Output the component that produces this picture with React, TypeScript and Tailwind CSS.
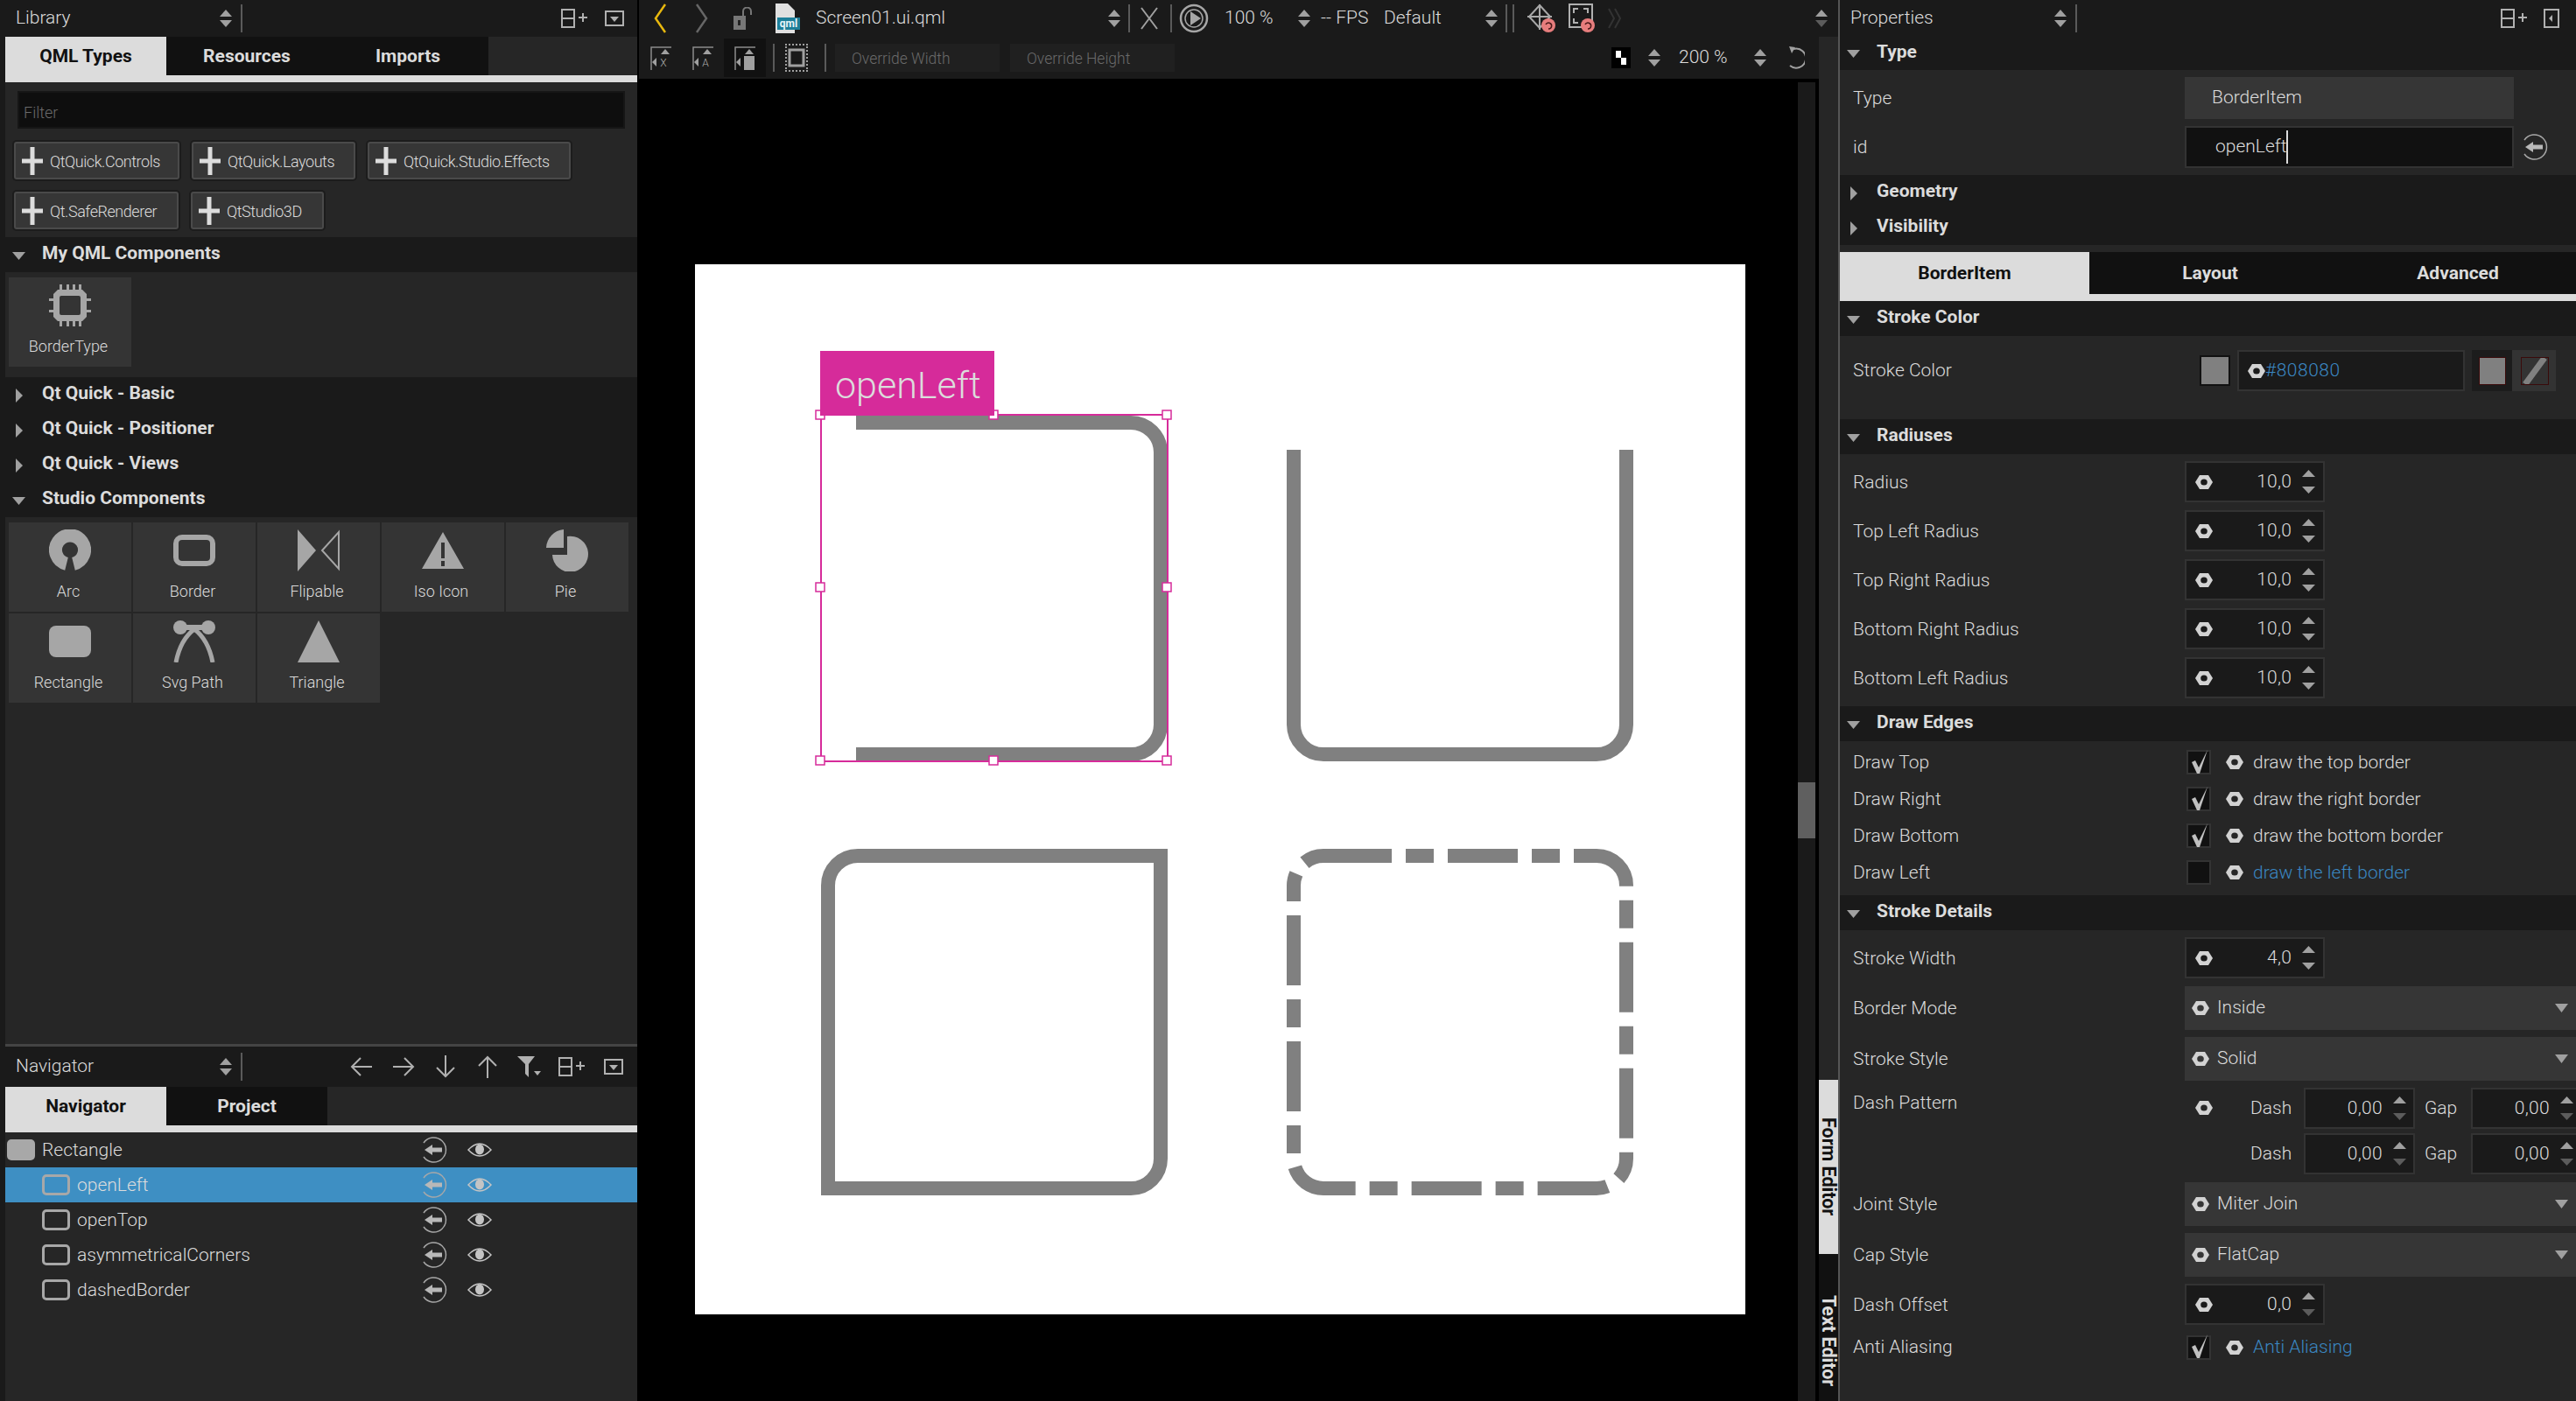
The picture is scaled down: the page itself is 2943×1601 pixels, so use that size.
import React from "react";

const GREY = "#a6a6a6";

const UpDown = ({ dim = false, tall = false }: { dim?: boolean; tall?: boolean }) =>
  tall ? (
    <svg width="15" height="27" viewBox="0 0 15 27" className="shrink-0">
      <path d="M7.5 0 L15 8 H0 Z" fill="#a0a0a0" />
      <path d="M7.5 27 L15 19 H0 Z" fill={dim ? "#5c5c5c" : "#a0a0a0"} />
    </svg>
  ) : (
    <svg width="14" height="20" viewBox="0 0 14 20" className="shrink-0">
      <path d="M7 0 L14 8 H0 Z" fill="#a0a0a0" />
      <path d="M7 20 L14 12 H0 Z" fill={dim ? "#5c5c5c" : "#a0a0a0"} />
    </svg>
  );

const Sep = ({ className = "" }: { className?: string }) => <div className={`h-[32px] w-[2px] shrink-0 bg-[#5a5a5a] ${className}`} />;

const SplitIcon = () => (
  <svg width="30" height="22" viewBox="0 0 30 22" fill="none" stroke="#b0b0b0" strokeWidth="2">
    <rect x="1" y="1" width="14" height="20" />
    <path d="M1 11 H15" />
    <path d="M20 10 H30 M25 5 V15" />
  </svg>
);

const CloseDown = () => (
  <svg width="22" height="18" viewBox="0 0 22 18">
    <rect x="1" y="1" width="20" height="16" fill="none" stroke="#b0b0b0" strokeWidth="2" />
    <path d="M6 7 H16 L11 13 Z" fill="#b0b0b0" />
  </svg>
);

const CloseLeft = () => (
  <svg width="18" height="22" viewBox="0 0 18 22">
    <rect x="1" y="1" width="16" height="20" fill="none" stroke="#b0b0b0" strokeWidth="2" />
    <path d="M6 11 L10 7 V15 Z" fill="#b0b0b0" />
  </svg>
);

const Nut = () => (
  <svg width="20" height="16" viewBox="0 0 20 16" className="shrink-0">
    <path
      fillRule="evenodd"
      d="M0 8 L5 0 H15 L20 8 L15 16 H5 Z M10 4.5 A3.8 3.5 0 1 0 10 11.5 A3.8 3.5 0 1 0 10 4.5 Z"
      fill="#d2d2d2"
    />
  </svg>
);

const BackArrow = () => (
  <svg width="30" height="30" viewBox="0 0 30 30" fill="none" className="shrink-0">
    <path d="M3 7 A14 14 0 1 1 3 23" stroke="#a8a8a8" strokeWidth="1.5" />
    <path d="M4 15 L13 9 V12.5 H24 V17.5 H13 V21 Z" fill="#b8b8b8" />
  </svg>
);

const Eye = () => (
  <svg width="28" height="20" viewBox="0 0 28 20" className="shrink-0">
    <path d="M1 10 Q14 -4 27 10 Q14 24 1 10 Z" fill="none" stroke="#c4c4c4" strokeWidth="1.5" />
    <ellipse cx="14" cy="9.5" rx="5" ry="6" fill="#c4c4c4" />
  </svg>
);

const Check = ({ on }: { on: boolean }) => (
  <div className="flex h-[28px] w-[28px] shrink-0 items-center justify-center border-2 border-[#333333] bg-[#111111]">
    {on && (
      <svg width="24" height="28" viewBox="0 0 22 28" className="-mt-[3px] ml-[2px]">
        <path d="M2 15 L6 13 L10 21 L20 1 L11 28 H8 Z" fill="#c0c0c0" />
      </svg>
    )}
  </div>
);

const Section = ({ title, open = true }: { title: string; open?: boolean }) => (
  <div className="flex h-[40px] shrink-0 items-center bg-[#1a1a1a] pl-[8px]">
    <div className="flex w-[34px] justify-start">
      {open ? (
        <svg width="15" height="9" viewBox="0 0 15 9" className="mt-[2px]">
          <path d="M0 0 H15 L7.5 9 Z" fill="#a0a0a0" />
        </svg>
      ) : (
        <svg width="8" height="16" viewBox="0 0 8 16" className="ml-[4px] mt-[2px]">
          <path d="M0 0 L8 8 L0 16 Z" fill="#a0a0a0" />
        </svg>
      )}
    </div>
    <span className="pb-[3px] text-[21px] font-bold text-[#dcdcdc]">{title}</span>
  </div>
);

const TabBar = ({ tabs }: { tabs: string[] }) => (
  <div className="shrink-0 border-b-[8px] border-[#dcdcdc] bg-[#262626]">
    <div className="flex h-[44px]">
      {tabs.map((t, i) => (
        <div
          key={t}
          className={`flex h-full w-[184px] items-center justify-center pt-[1px] text-[21px] font-bold ${
            i === 0 ? "bg-[#dcdcdc] text-[#111111]" : "bg-[#111111] text-[#dcdcdc]"
          }`}
        >
          {t}
        </div>
      ))}
    </div>
  </div>
);

const ImportButton = ({ label, width }: { label: string; width: string }) => (
  <div className={`flex h-[43px] items-center rounded-[3px] border-2 border-[#4a4a4a] bg-[#363636] pl-[7px] shadow-[0_0_0_2px_#1c1c1c] ${width}`}>
    <svg width="24" height="32" viewBox="0 0 24 32" className="shrink-0">
      <path d="M9.5 0 H14.5 V13.5 H24 V18.5 H14.5 V32 H9.5 V18.5 H0 V13.5 H9.5 Z" fill="#dcdcdc" />
    </svg>
    <span className="ml-[8px] pt-[1px] text-[18px] font-light tracking-[-0.45px] text-[#dcdcdc]">{label}</span>
  </div>
);

const Tile = ({ label, children }: { label: string; children: React.ReactNode }) => (
  <div className="flex h-[102px] w-[140px] flex-col items-center bg-[#343434] pt-[8px]">
    <svg width="48" height="48" viewBox="0 0 48 48" className="shrink-0">
      {children}
    </svg>
    <span className="mt-[11px] -ml-[4px] text-[18px] leading-[24px] font-light text-[#dcdcdc]">{label}</span>
  </div>
);

const NavRow = ({ label, solid = false, selected = false }: { label: string; solid?: boolean; selected?: boolean }) => (
  <div className={`flex h-[40px] items-center ${selected ? "bg-[#3e8fc3]" : ""} ${solid ? "pl-[2px]" : "pl-[42px]"}`}>
    <div
      className={`h-[24px] w-[32px] shrink-0 rounded-[5px] ${solid ? "bg-[#a8a8a8]" : "border-[3px] border-[#a8a8a8]"}`}
    />
    <span className="ml-[8px] w-[406px] shrink-0 pt-[2px] text-[21px] font-light text-[#dcdcdc]">{label}</span>
    <div className={`${solid ? "ml-[27px]" : "-ml-[13px]"} flex items-center gap-[23px]`}>
      <BackArrow />
      <Eye />
    </div>
  </div>
);

const Label = ({ children }: { children: React.ReactNode }) => (
  <span className="w-[379px] shrink-0 pt-[2px] text-[21px] font-light text-[#dcdcdc]">{children}</span>
);

const SpinBox = ({ value }: { value: string }) => (
  <div className="flex h-[47px] w-[160px] shrink-0 items-center border-2 border-[#333333] bg-[#1a1a1a] pl-[10px]">
    <Nut />
    <span className="mr-[12px] flex-1 text-right text-[21px] font-light tracking-[0.2px] text-[#dcdcdc]">{value}</span>
    <div className="mr-[9px]">
      <UpDown tall dim={value === "0,0"} />
    </div>
  </div>
);

const SpinRow = ({ label, value, className = "" }: { label: string; value: string; className?: string }) => (
  <div className={`flex items-center pl-[15px] ${className}`}>
    <Label>{label}</Label>
    <SpinBox value={value} />
  </div>
);

const Combo = ({ label, value, className = "" }: { label: string; value: string; className?: string }) => (
  <div className={`flex items-center pl-[15px] ${className}`}>
    <Label>{label}</Label>
    <div className="flex h-[50px] flex-1 items-center bg-[#363636] pl-[8px]">
      <Nut />
      <span className="ml-[9px] flex-1 text-[21px] font-light text-[#dcdcdc]">{value}</span>
      <svg width="15" height="10" viewBox="0 0 15 10" className="mr-[9px]">
        <path d="M0 0 H15 L7.5 10 Z" fill="#a0a0a0" />
      </svg>
    </div>
  </div>
);

const CheckRow = ({ label, text, on, blue = false }: { label: string; text: string; on: boolean; blue?: boolean }) => (
  <div className="flex h-[42px] items-center pl-[15px]">
    <Label>{label}</Label>
    <div className="ml-[2px]">
      <Check on={on} />
    </div>
    <div className="ml-[17px]">
      <Nut />
    </div>
    <span className={`ml-[11px] pt-[2px] text-[21px] font-light ${blue ? "text-[#3a87c2]" : "text-[#dcdcdc]"}`}>{text}</span>
  </div>
);

const DashSpin = ({ value }: { value: string }) => (
  <div className="flex h-[47px] w-[127px] shrink-0 items-center border-2 border-[#333333] bg-[#1a1a1a]">
    <span className="mr-[12px] flex-1 text-right text-[21px] font-light tracking-[0.3px] text-[#dcdcdc]">{value}</span>
    <div className="mr-[8px]">
      <UpDown tall dim />
    </div>
  </div>
);

const DashLine = () => (
  <div className="flex items-center">
    <span className="w-[61px] text-[21px] font-light text-[#dcdcdc]">Dash</span>
    <DashSpin value="0,00" />
    <span className="ml-[11px] w-[53px] text-[21px] font-light text-[#dcdcdc]">Gap</span>
    <DashSpin value="0,00" />
  </div>
);

const Handle = ({ x, y }: { x: number; y: number }) => (
  <rect x={x - 5} y={y - 5} width="10" height="10" fill="#ffffff" stroke="#d62b9a" strokeWidth="1.5" />
);

const LibraryPanel = () => (
  <div className="flex h-[1193px] flex-col overflow-hidden">
    <div className="flex h-[42px] shrink-0 items-center bg-[#1a1a1a] pl-[12px]">
      <span className="w-[233px] text-[21px] font-light text-[#dcdcdc]">Library</span>
      <UpDown />
      <Sep className="ml-[10px]" />
      <div className="ml-auto flex items-center gap-[20px] pr-[15px]">
        <SplitIcon />
        <CloseDown />
      </div>
    </div>
    <TabBar tabs={["QML Types", "Resources", "Imports"]} />
    <div className="flex-1 bg-[#262626]">
      <div className="mx-[14px] mt-[10px] flex h-[43px] items-center border-2 border-[#161616] bg-[#0e0e0e] pl-[5px] pt-[5px] text-[18px] font-light text-[#6a6a6a]">
        Filter
      </div>
      <div className="mt-[15px] flex gap-[14px] pl-[10px]">
        <ImportButton label="QtQuick.Controls" width="w-[189px]" />
        <ImportButton label="QtQuick.Layouts" width="w-[187px]" />
        <ImportButton label="QtQuick.Studio.Effects" width="w-[232px]" />
      </div>
      <div className="mt-[14px] flex gap-[14px] pl-[10px]">
        <ImportButton label="Qt.SafeRenderer" width="w-[188px]" />
        <ImportButton label="QtStudio3D" width="w-[152px]" />
      </div>
      <div className="mt-[9px]">
        <Section title="My QML Components" />
      </div>
      <div className="py-[6px] pb-[12px] pl-[4px]">
        <Tile label="BorderType">
          <g fill="#a6a6a6">
            <path
              fillRule="evenodd"
              d="M10 6 H38 L43 11 V37 L38 42 H10 L5 37 V11 Z M14 13 A2 2 0 0 0 12 15 V33 A2 2 0 0 0 14 35 H34 A2 2 0 0 0 36 33 V15 A2 2 0 0 0 34 13 Z"
            />
            <path d="M12 0 H15 V6 H12 Z M20 0 H23 V6 H20 Z M27 0 H30 V6 H27 Z M34 0 H37 V6 H34 Z" />
            <path d="M12 42 H15 V48 H12 Z M20 42 H23 V48 H20 Z M27 42 H30 V48 H27 Z M34 42 H37 V48 H34 Z" />
            <path d="M0 16 H5 V19 H0 Z M0 29 H5 V32 H0 Z M43 16 H48 V19 H43 Z M43 29 H48 V32 H43 Z" />
          </g>
        </Tile>
      </div>
      <Section title="Qt Quick - Basic" open={false} />
      <Section title="Qt Quick - Positioner" open={false} />
      <Section title="Qt Quick - Views" open={false} />
      <Section title="Studio Components" />
      <div className="grid grid-cols-[repeat(5,140px)] gap-[2px] pl-[4px] pt-[6px]">
        <Tile label="Arc">
          <path d="M28 39.4 A16.5 16.5 0 1 0 20 39.4" fill="none" stroke={GREY} strokeWidth="15" />
        </Tile>
        <Tile label="Border">
          <rect x="3" y="9" width="42" height="30" rx="7" fill="none" stroke={GREY} strokeWidth="6" />
        </Tile>
        <Tile label="Flipable">
          <path d="M0 0 L21 24 L0 48 Z" fill={GREY} />
          <path d="M47 3 V45 L28 24 Z" fill="none" stroke={GREY} strokeWidth="2" />
        </Tile>
        <Tile label="Iso Icon">
          <path
            fillRule="evenodd"
            d="M24 3 L48 45 H0 Z M22 15 V33 H26 V15 Z M22 36 V42 H26 V36 Z"
            fill={GREY}
          />
        </Tile>
        <Tile label="Pie">
          <path d="M20 0 V21 H0 A22 22 0 0 1 20 0 Z" fill={GREY} />
          <path d="M24 8 A20.5 20.5 0 1 1 7 29 H24 Z" fill={GREY} />
        </Tile>
        <Tile label="Rectangle">
          <rect x="0" y="6" width="48" height="36" rx="8" fill={GREY} />
        </Tile>
        <Tile label="Svg Path">
          <ellipse cx="8" cy="8" rx="8" ry="8" fill={GREY} />
          <ellipse cx="40" cy="8" rx="8" ry="8" fill={GREY} />
          <path d="M8 8 H40" stroke={GREY} strokeWidth="6" />
          <path d="M3 48 Q8 22 24 10 Q40 22 45 48" fill="none" stroke={GREY} strokeWidth="5" />
        </Tile>
        <Tile label="Triangle">
          <path d="M24 0 L48 48 H0 Z" fill={GREY} />
        </Tile>
      </div>
    </div>
  </div>
);

const NavSlot = ({ children }: { children: React.ReactNode }) => (
  <div className="flex w-[48px] justify-center">{children}</div>
);

const NavigatorPanel = () => (
  <div className="flex flex-1 flex-col overflow-hidden border-t-[3px] border-[#444444]">
    <div className="flex h-[46px] shrink-0 items-center bg-[#1a1a1a] pl-[12px]">
      <span className="w-[233px] text-[21px] font-light text-[#dcdcdc]">Navigator</span>
      <UpDown />
      <Sep className="ml-[10px]" />
      <div className="ml-auto flex items-center pr-[3px]">
        <NavSlot>
          <svg width="26" height="22" viewBox="0 0 26 22" fill="none" stroke="#b0b0b0" strokeWidth="2">
            <path d="M25 11 H2 M12 1 L2 11 L12 21" />
          </svg>
        </NavSlot>
        <NavSlot>
          <svg width="26" height="22" viewBox="0 0 26 22" fill="none" stroke="#b0b0b0" strokeWidth="2">
            <path d="M1 11 H24 M14 1 L24 11 L14 21" />
          </svg>
        </NavSlot>
        <NavSlot>
          <svg width="22" height="26" viewBox="0 0 22 26" fill="none" stroke="#b0b0b0" strokeWidth="2">
            <path d="M11 0 V24 M1 14 L11 24 L21 14" />
          </svg>
        </NavSlot>
        <NavSlot>
          <svg width="22" height="26" viewBox="0 0 22 26" fill="none" stroke="#b0b0b0" strokeWidth="2">
            <path d="M11 26 V2 M1 12 L11 2 L21 12" />
          </svg>
        </NavSlot>
        <NavSlot>
          <svg width="28" height="24" viewBox="0 0 28 24">
            <path d="M0 0 H20 L13 9 V24 L9 20 V9 Z" fill="#b0b0b0" />
            <path d="M19 17 H27 L23 22 Z" fill="#b0b0b0" />
          </svg>
        </NavSlot>
        <NavSlot>
          <SplitIcon />
        </NavSlot>
        <NavSlot>
          <CloseDown />
        </NavSlot>
      </div>
    </div>
    <TabBar tabs={["Navigator", "Project"]} />
    <div className="flex-1 bg-[#262626]">
      <NavRow label="Rectangle" solid />
      <NavRow label="openLeft" selected />
      <NavRow label="openTop" />
      <NavRow label="asymmetricalCorners" />
      <NavRow label="dashedBorder" />
    </div>
  </div>
);

const TopBar = () => (
  <div className="flex h-[42px] shrink-0 items-center bg-[#1a1a1a]">
    <svg width="14" height="34" viewBox="0 0 14 34" fill="none" stroke="#e8b80e" strokeWidth="2.5" className="ml-[17px] shrink-0">
      <path d="M13 1 L2 17 L13 33" />
    </svg>
    <svg width="14" height="34" viewBox="0 0 14 34" fill="none" stroke="#666666" strokeWidth="2.5" className="ml-[34px] shrink-0">
      <path d="M1 1 L12 17 L1 33" />
    </svg>
    <svg width="22" height="26" viewBox="0 0 22 26" className="ml-[29px] shrink-0">
      <rect x="0" y="10" width="14" height="16" fill="#777777" />
      <rect x="5" y="15" width="3" height="6" fill="#222222" />
      <path d="M11 10 V5 A4.5 4.5 0 0 1 20 5 V9" fill="none" stroke="#777777" strokeWidth="2" />
    </svg>
    <svg width="28" height="34" viewBox="0 0 28 34" className="ml-[26px] shrink-0">
      <path d="M0 0 H14 L22 8 V34 H0 Z" fill="#e0e0e0" />
      <rect x="2" y="16" width="26" height="14" fill="#1d7f99" />
      <text x="15" y="27" textAnchor="middle" fontSize="12" fontWeight="bold" fill="#e8f4f8">qml</text>
    </svg>
    <span className="ml-[18px] w-[334px] shrink-0 text-[21px] font-light text-[#dcdcdc]">Screen01.ui.qml</span>
    <UpDown />
    <Sep className="ml-[9px]" />
    <svg width="22" height="32" viewBox="0 0 22 32" fill="none" stroke="#a0a0a0" strokeWidth="2" className="ml-[11px] shrink-0">
      <path d="M2 4 L20 28 M20 4 L2 28" />
    </svg>
    <Sep className="ml-[13px]" />
    <svg width="34" height="34" viewBox="0 0 34 34" className="ml-[8px] shrink-0">
      <circle cx="17" cy="17" r="15" fill="none" stroke="#a6a6a6" strokeWidth="2.5" />
      <circle cx="17" cy="17" r="10" fill="none" stroke="#a6a6a6" strokeWidth="1.5" />
      <path d="M13 9 L25 17 L13 25 Z" fill="#a6a6a6" />
    </svg>
    <span className="ml-[18px] w-[84px] shrink-0 text-[21px] font-light text-[#dcdcdc]">100 %</span>
    <UpDown />
    <span className="ml-[12px] w-[72px] shrink-0 text-[21px] font-light text-[#dcdcdc]">-- FPS</span>
    <span className="w-[116px] shrink-0 text-[21px] font-light text-[#dcdcdc]">Default</span>
    <UpDown />
    <Sep className="ml-[9px]" />
    <Sep className="ml-[6px]" />
    <svg width="33" height="34" viewBox="0 0 33 34" className="ml-[15px] shrink-0">
      <path d="M14 2 L26 15 L14 28 L2 15 Z" fill="none" stroke="#a8a8a8" strokeWidth="2" />
      <path d="M0 15 H28 M14 1 V30" stroke="#a8a8a8" strokeWidth="2" />
      <circle cx="24" cy="25" r="8" fill="#e77d7d" />
      <path d="M21 24 A3.5 3.5 0 1 1 24 29" fill="none" stroke="#4a1a1a" strokeWidth="1.5" />
    </svg>
    <svg width="30" height="34" viewBox="0 0 30 34" className="ml-[14px] shrink-0">
      <rect x="1" y="1" width="26" height="26" fill="none" stroke="#b0b0b0" strokeWidth="2" />
      <path d="M6 11 V6 H11 M17 6 H22 V11 M6 17 V22 H11" fill="none" stroke="#b0b0b0" strokeWidth="2" />
      <circle cx="22" cy="25" r="8" fill="#e77d7d" />
      <path d="M19 24 A3.5 3.5 0 1 1 22 29" fill="none" stroke="#4a1a1a" strokeWidth="1.5" />
    </svg>
    <svg width="16" height="26" viewBox="0 0 16 26" fill="none" stroke="#333333" strokeWidth="2" className="ml-[14px] shrink-0">
      <path d="M2 2 L8 13 L2 24 M9 2 L15 13 L9 24" />
    </svg>
    <div className="ml-auto pr-[12px]">
      <UpDown dim />
    </div>
  </div>
);

const ModeIcon = ({ label, solid = false }: { label?: string; solid?: boolean }) => (
  <svg width="24" height="27" viewBox="0 0 24 27" className="shrink-0">
    <path d="M1 27 V1 H24" fill="none" stroke="#8c8c8c" strokeWidth="1.5" />
    <path d="M17 3 L22 9 H12 Z" fill="#a0a0a0" />
    <path d="M2 18 L7 13 V23 Z" fill="#a0a0a0" />
    {label && (
      <text x="15" y="23" textAnchor="middle" fontSize="12" fontWeight="300" fill="#b0b0b0">
        {label}
      </text>
    )}
    {solid && <rect x="11" y="11" width="12" height="16" fill="#a0a0a0" />}
  </svg>
);

const SecondBar = () => (
  <div className="flex h-[48px] shrink-0 items-center bg-[#1a1a1a]">
    <div className="ml-[13px]">
      <ModeIcon label="X" />
    </div>
    <div className="ml-[24px]">
      <ModeIcon label="A" />
    </div>
    <div className="ml-[12px] flex h-[44px] w-[48px] items-center justify-center bg-[#111111]">
      <ModeIcon solid />
    </div>
    <Sep className="ml-[8px]" />
    <svg width="26" height="32" viewBox="0 0 26 32" className="ml-[12px] shrink-0">
      <path d="M0 1 H26 M0 31 H26" stroke="#a0a0a0" strokeWidth="2" strokeDasharray="2 2" />
      <rect x="5" y="7" width="16" height="18" fill="none" stroke="#a0a0a0" strokeWidth="3" />
      <path d="M1 3 V29 M25 3 V29" stroke="#a0a0a0" strokeWidth="2" strokeDasharray="2 2" />
    </svg>
    <Sep className="ml-[19px]" />
    <div className="ml-[10px] flex h-[32px] w-[188px] items-center bg-[#202020] pl-[19px] pt-[2px] text-[17.5px] font-light text-[#6a6a6a]">Override Width</div>
    <div className="ml-[12px] flex h-[32px] w-[188px] items-center bg-[#202020] pl-[19px] pt-[2px] text-[17.5px] font-light text-[#6a6a6a]">Override Height</div>
    <svg width="22" height="24" viewBox="0 0 22 24" className="ml-[499px] shrink-0">
      <rect width="22" height="24" fill="#000000" />
      <rect x="5" y="4" width="6" height="8" fill="#ffffff" />
      <rect x="11" y="12" width="6" height="8" fill="#ffffff" />
    </svg>
    <div className="ml-[20px]">
      <UpDown />
    </div>
    <span className="ml-[21px] w-[86px] shrink-0 text-[21px] font-light text-[#dcdcdc]">200 %</span>
    <UpDown />
    <svg width="20" height="30" viewBox="0 0 20 30" fill="none" stroke="#a0a0a0" strokeWidth="2" className="ml-[24px] shrink-0">
      <path d="M7 5 A11 11 0 1 1 3 24" />
      <path d="M2 2 L9 3 L5 10 Z" fill="#a0a0a0" stroke="none" />
    </svg>
  </div>
);

const Canvas = () => (
  <div className="relative h-[1200px] w-[1200px] shrink-0 bg-white">
    <svg width="1200" height="1200" viewBox="0 0 1200 1200" fill="none" stroke="#808080" strokeWidth="16" className="block">
      <path d="M184 181 H498 A34 34 0 0 1 532 215 V526 A34 34 0 0 1 498 560 H184" />
      <path d="M684 212 V526 A34 34 0 0 0 718 560 H1030 A34 34 0 0 0 1064 526 V212" />
      <path d="M186 676 H532 V1022 A34 34 0 0 1 498 1056 H152 V710 A34 34 0 0 1 186 676 Z" />
      <path
        d="M718 676 H1030 A34 34 0 0 1 1064 710 V1022 A34 34 0 0 1 1030 1056 H718 A34 34 0 0 1 684 1022 V710 A34 34 0 0 1 718 676 Z"
        strokeDasharray="80 16 32 16"
        strokeDashoffset="2"
      />
      <g stroke="#d62b9a" strokeWidth="2">
        <rect x="144" y="172" width="396" height="396" />
      </g>
      <g stroke="none">
        <Handle x={143} y={172} />
        <Handle x={341} y={172} />
        <Handle x={539} y={172} />
        <Handle x={143} y={369} />
        <Handle x={539} y={369} />
        <Handle x={143} y={567} />
        <Handle x={341} y={567} />
        <Handle x={539} y={567} />
      </g>
    </svg>
    <div className="absolute left-[143px] top-[99px] flex h-[74px] w-[199px] items-center bg-[#d62b9a] pl-[17px] pt-[4px] text-[43px] font-light text-[#dcdcdc]">
      openLeft
    </div>
  </div>
);

const PropertiesPanel = () => (
  <div className="flex h-full w-[841px] shrink-0 flex-col overflow-hidden bg-[#262626]">
    <div className="flex h-[42px] shrink-0 items-center bg-[#1a1a1a] pl-[12px]">
      <span className="w-[233px] text-[21px] font-light text-[#dcdcdc]">Properties</span>
      <UpDown />
      <Sep className="ml-[10px]" />
      <div className="ml-auto flex items-center gap-[19px] pr-[19px]">
        <SplitIcon />
        <CloseLeft />
      </div>
    </div>
    <div className="flex h-[38px] shrink-0 items-center bg-[#1a1a1a] pl-[8px]">
      <svg width="15" height="9" viewBox="0 0 15 9">
        <path d="M0 0 H15 L7.5 9 Z" fill="#a0a0a0" />
      </svg>
      <span className="ml-[19px] pb-[3px] text-[21px] font-bold text-[#dcdcdc]">Type</span>
    </div>
    <div className="flex flex-col gap-[8px] py-[8px]">
      <div className="flex items-center pl-[15px]">
        <Label>Type</Label>
        <div className="flex h-[48px] w-[376px] items-center bg-[#363636] pl-[31px] text-[21px] font-light text-[#dcdcdc]">BorderItem</div>
      </div>
      <div className="flex items-center pl-[15px]">
        <Label>id</Label>
        <div className="flex h-[48px] w-[376px] items-center border-2 border-[#333333] bg-[#111111] pl-[33px] text-[21px] font-light text-[#dcdcdc]">
          openLeft
          <div className="h-[38px] w-[2px] bg-[#dcdcdc]" />
        </div>
        <div className="ml-[9px]">
          <BackArrow />
        </div>
      </div>
    </div>
    <Section title="Geometry" open={false} />
    <Section title="Visibility" open={false} />
    <div className="h-[8px] shrink-0" />
    <div className="flex h-[48px] shrink-0 bg-[#111111]">
      <div className="flex w-[285px] shrink-0 items-center justify-center bg-[#dcdcdc] pt-[1px] text-[21px] font-bold text-[#111111]">BorderItem</div>
      <div className="flex w-[276px] shrink-0 items-center justify-center pt-[1px] text-[21px] font-bold text-[#dcdcdc]">Layout</div>
      <div className="flex w-[290px] shrink-0 items-center justify-center pt-[1px] text-[21px] font-bold text-[#dcdcdc]">Advanced</div>
    </div>
    <div className="h-[8px] shrink-0 bg-[#dcdcdc]" />
    <Section title="Stroke Color" />
    <div className="flex h-[95px] shrink-0 items-start pl-[15px] pt-[16px]">
      <span className="mt-[8px] w-[379px] shrink-0 text-[21px] font-light text-[#dcdcdc]">Stroke Color</span>
      <div className="ml-[17px] mt-[6px] h-[35px] w-[35px] border-2 border-[#111111] bg-[#808080]" />
      <div className="ml-[8px] flex h-[47px] w-[260px] items-center border-2 border-[#333333] bg-[#1a1a1a] pl-[10px] text-[21px] font-light tracking-[0.5px] text-[#3a87c2]">
        <Nut />
        <span>#808080</span>
      </div>
      <div className="ml-[8px] flex h-[47px] w-[96px] bg-[#333333]">
        <div className="flex w-[46px] items-center justify-center bg-[#1c1c1c]">
          <div className="h-[32px] w-[31px] border border-[#3a0a0a] bg-[#808080]" />
        </div>
        <div className="ml-[10px] mt-[8px] h-[32px] w-[32px] border border-[#3a0a0a] bg-[#333333]">
          <svg width="30" height="30" viewBox="0 0 30 30">
            <path d="M4 30 L26 0" stroke="#808080" strokeWidth="7" />
          </svg>
        </div>
      </div>
    </div>
    <Section title="Radiuses" />
    <div className="flex h-[288px] shrink-0 flex-col gap-[9px] pt-[8px]">
      <SpinRow label="Radius" value="10,0" />
      <SpinRow label="Top Left Radius" value="10,0" />
      <SpinRow label="Top Right Radius" value="10,0" />
      <SpinRow label="Bottom Right Radius" value="10,0" />
      <SpinRow label="Bottom Left Radius" value="10,0" />
    </div>
    <Section title="Draw Edges" />
    <div className="flex h-[176px] shrink-0 flex-col pt-[3px]">
      <CheckRow label="Draw Top" text="draw the top border" on />
      <CheckRow label="Draw Right" text="draw the right border" on />
      <CheckRow label="Draw Bottom" text="draw the bottom border" on />
      <CheckRow label="Draw Left" text="draw the left border" on={false} blue />
    </div>
    <Section title="Stroke Details" />
    <div className="flex flex-col pt-[8px]">
      <SpinRow label="Stroke Width" value="4,0" />
      <Combo label="Border Mode" value="Inside" className="mt-[9px]" />
      <Combo label="Stroke Style" value="Solid" className="mt-[8px]" />
      <div className="mt-[8px] flex h-[99px] pl-[15px]">
        <span className="w-[379px] shrink-0 pt-[2px] text-[21px] font-light text-[#dcdcdc]">Dash Pattern</span>
        <div className="ml-[12px] mt-[15px]">
          <Nut />
        </div>
        <div className="ml-[43px] flex flex-col gap-[5px]">
          <DashLine />
          <DashLine />
        </div>
      </div>
      <Combo label="Joint Style" value="Miter Join" className="mt-[9px]" />
      <Combo label="Cap Style" value="FlatCap" className="mt-[8px]" />
      <SpinRow label="Dash Offset" value="0,0" className="mt-[8px]" />
      <div className="mt-[10px] flex items-center pl-[15px]">
        <span className="w-[379px] shrink-0 text-[21px] font-light text-[#dcdcdc]">Anti Aliasing</span>
        <div className="ml-[2px]">
          <Check on />
        </div>
        <div className="ml-[17px]">
          <Nut />
        </div>
        <span className="ml-[11px] text-[21px] font-light text-[#3a87c2]">Anti Aliasing</span>
      </div>
    </div>
  </div>
);

export default function App() {
  return (
    <div className="flex h-[1601px] w-[2943px] overflow-hidden bg-black [font-family:Roboto,sans-serif]">
      {/* left column */}
      <div className="flex h-full w-[730px] shrink-0 flex-col border-r-2 border-l-[6px] border-r-black border-l-[#1a1a1a]">
        <LibraryPanel />
        <NavigatorPanel />
      </div>

      {/* center column */}
      <div className="flex h-full w-[1370px] shrink-0 flex-col">
        <TopBar />
        <div className="flex min-h-0 flex-1">
          <div className="flex w-[1348px] shrink-0 flex-col">
            <SecondBar />
            <div className="flex min-h-0 flex-1">
              <div className="flex-1 overflow-hidden pl-[64px] pt-[212px]">
                <Canvas />
              </div>
              <div className="mt-[4px] w-[20px] shrink-0 bg-[#1a1a1a]">
                <div className="mt-[800px] h-[64px] bg-[#5f5f5f]" />
              </div>
              <div className="w-[4px] shrink-0" />
            </div>
          </div>
          <div className="flex w-[22px] shrink-0 flex-col overflow-hidden bg-[#262626] pt-[1192px]">
            <div className="flex h-[199px] shrink-0 items-center justify-center bg-[#dcdcdc] text-[21.5px] leading-[22px] font-bold text-[#111111] [writing-mode:vertical-rl]">
              Form Editor
            </div>
            <div className="flex h-[199px] shrink-0 items-center justify-center bg-[#111111] text-[21.5px] leading-[22px] font-bold text-[#dcdcdc] [writing-mode:vertical-rl]">
              Text Editor
            </div>
          </div>
        </div>
      </div>

      <div className="h-full w-[2px] shrink-0 bg-[#555555]" />
      <PropertiesPanel />
    </div>
  );
}
